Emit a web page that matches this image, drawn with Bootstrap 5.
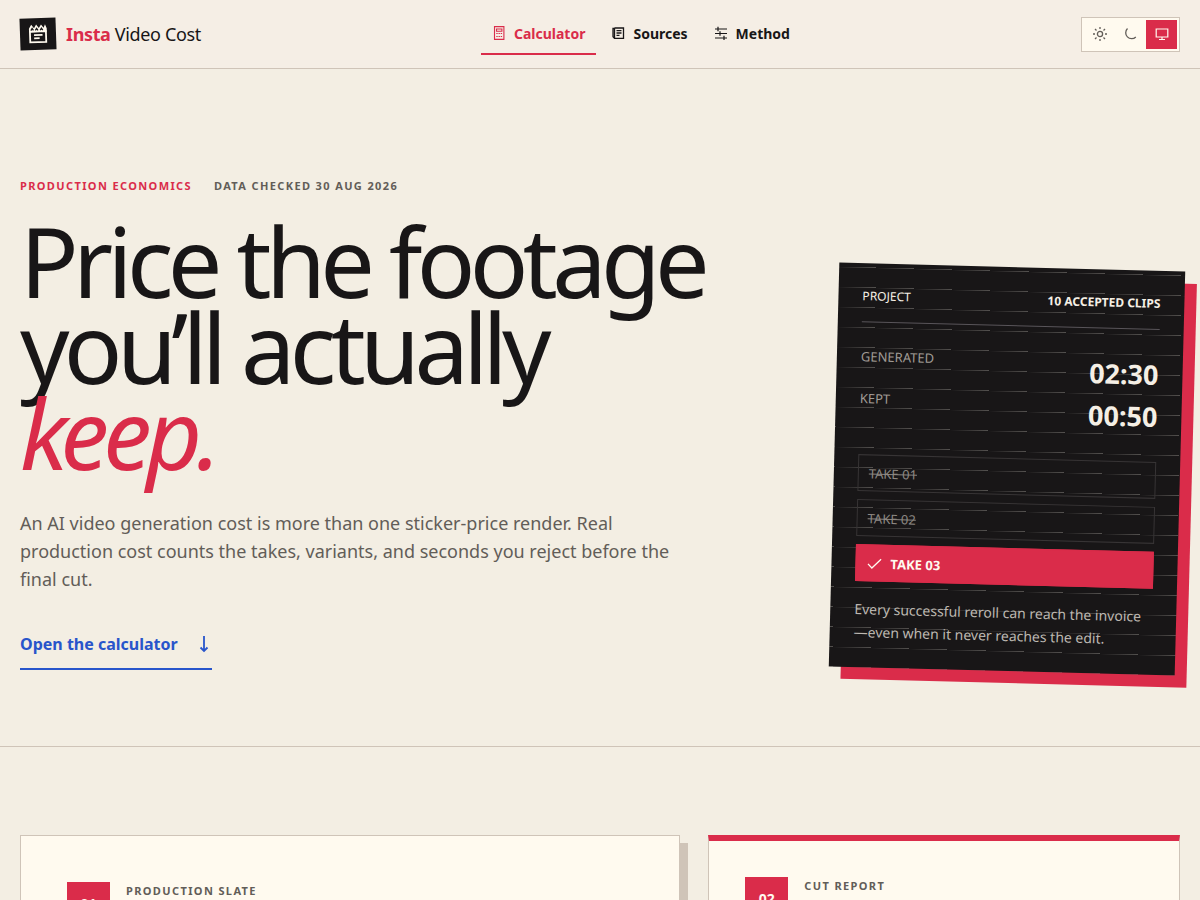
<!DOCTYPE html>
<html lang="en">
<head>
<meta charset="utf-8">
<meta name="viewport" content="width=device-width, initial-scale=1">
<title>Insta Video Cost</title>
<link href="https://cdn.jsdelivr.net/npm/bootstrap@5.3.0/dist/css/bootstrap.min.css" rel="stylesheet">
<style>
:root{--ink:#181617;--red:#da2c4a;--paper:#f3eee3;--sheet:#fffaef;--rule:#cfc4b8;--muted:#625d58;--blue:#2855cb}
body{background:var(--paper);color:var(--ink);font-family:"Noto Sans",sans-serif}
svg{fill:none;stroke:currentColor;flex:none}
.text-red{color:var(--red)}
.site-header{background:#f5eee5;border-bottom:1px solid var(--rule);padding:12px 20px;min-height:69px}
.brand{color:var(--ink);gap:10px;font-size:18px;line-height:24px;letter-spacing:-.02em}
.brand-mark{width:36px;height:32px;background:var(--ink);color:var(--sheet);transform:rotate(-2deg);place-items:center}
.main-nav{gap:4px}
.main-nav .nav-link{display:flex;align-items:center;gap:8px;height:42px;padding:0 11px;font-size:14px;font-weight:700;color:var(--ink);border-bottom:2px solid transparent}
.main-nav .nav-link.active{color:var(--red);border-color:var(--red)}
.theme-switch{background:var(--sheet);border:1px solid var(--rule);padding:2px}
.theme-switch button{width:31px;height:29px;padding:0;border:0;background:none;color:var(--muted);display:grid;place-items:center}
.theme-switch button.active{background:var(--red);color:var(--sheet)}
.hero{padding:108px 20px 75px;border-bottom:1px solid var(--rule)}
.hero-copy{max-width:700px;padding-bottom:1px}
.eyebrow{font-size:11px;line-height:18px;font-weight:700;letter-spacing:.125em;text-transform:uppercase;color:var(--muted)}
.eyebrow-row{column-gap:22px}
.hero h1{font-size:97px;line-height:86px;font-weight:400;letter-spacing:-.058em;margin:22px 0 0}
.hero h1 em{color:var(--red)}
.intro{font-size:18px;line-height:28px;color:var(--muted);max-width:660px;margin:34px 0 0}
.cta{color:var(--blue);border-bottom:2px solid var(--blue);font-weight:700;font-size:16px;line-height:24px;gap:18px;padding:12px 0;margin-top:27px}
.slate{width:346px;padding:24px;color:#f5efe5;background:repeating-linear-gradient(0deg,transparent 0 19px,rgba(255,250,239,.26) 20px),var(--ink);box-shadow:12px 12px 0 var(--red);transform:rotate(1.5deg)}
.slate-top{font-size:12px;line-height:18px;padding-bottom:16px;border-bottom:1px solid #59555a}
.times{font-size:13px;line-height:20px;padding:24px 0;color:#a09b95;margin:0}
.times dt{font-weight:400}
.times dd{margin:0;font-size:27px;line-height:42px;font-weight:700;color:#f5efe5}
.times div{height:42px}
.takes{gap:8px;font-size:13px;line-height:18px}
.takes li{padding:9px 10px;border:1px solid #373435;color:#8d8883;height:37px}
.takes li.kept{background:var(--red);border-color:var(--red);color:var(--sheet);font-weight:700;gap:8px}
.slate-note{font-size:14px;line-height:23px;color:#bdb8b1;margin:16px 0 0}
.panels{display:grid;grid-template-columns:7fr 5fr;gap:28px;padding:88px 20px 0}
.panel{background:var(--sheet);border:1px solid var(--rule);gap:16px}
.panel-input{padding:46px;box-shadow:8px 8px 0 var(--rule)}
.panel-report{padding:36px;border-top:6px solid var(--red)}
.step{width:43px;height:43px;background:var(--red);color:var(--sheet);font-size:14px;font-weight:700;display:grid;place-items:center}
@media(max-width:991px){.hero h1{font-size:64px;line-height:60px}.panels{grid-template-columns:1fr}}
</style>
</head>
<body>
<header class="site-header d-flex flex-wrap align-items-center justify-content-between">
  <a class="brand d-flex align-items-center text-decoration-none" href="#">
    <span class="brand-mark d-grid"><svg width="20" height="20" viewBox="0 0 20 20" stroke-width="1.8"><path d="M2 7.500h16v10.600H2zM6 11h8.500M6 14.200h5.500"/><path fill="currentColor" stroke="none" d="M1.100 8V4.500L3.500.5 6.200 4 8.400.5 11 4 13.300.5 15.800 4 17.300.5 18.900 4.500V8z"/><path stroke="#181617" stroke-width="1.300" d="m3 6.300 1.300-2 1.300 2M7.500 6.300l1.300-2 1.300 2M12.300 6.300l1.300-2 1.300 2"/></svg></span>
    <span><strong class="text-red">Insta</strong> Video Cost</span>
  </a>
  <nav class="main-nav nav" aria-label="Main">
    <a class="nav-link active" href="#calculator"><svg width="14" height="14" viewBox="0 0 14 14" stroke-width="1.100"><path d="M2.500.6h9.400v12.800H2.500zM4.500 3h5.400v2.200H4.500zM4.300 7.500h1.400m.8 0h1.400m.8 0h1.400M4.300 10.500h1.400m.8 0h1.400m.8 0h1.400"/></svg>Calculator</a>
    <a class="nav-link" href="#sources"><svg width="14" height="14" viewBox="0 0 14 14" stroke-width="1.300"><path d="M3.500 2h9v10.300H3.500V2M3.500 2.500H2v8.300l1.500 1.500M5.500 4.600h5M5.500 7h5M5.500 9.400h3"/></svg>Sources</a>
    <a class="nav-link" href="#method"><svg width="14" height="14" viewBox="0 0 14 14" stroke-width="1.200"><path d="M1 3h12M1 7.500h12M1 12h12M4 .8v4.400M6 5.300v4.400M10 9.800v4.200"/></svg>Method</a>
  </nav>
  <div class="theme-switch d-flex" role="group" aria-label="Theme">
    <button type="button" aria-label="Light"><svg width="14" height="14" viewBox="0 0 14 14" stroke-width="1.300"><circle cx="7" cy="7" r="2.600"/><path d="M7 0v2M7 12v2M0 7h2M12 7h2M2 2l1.500 1.500M10.500 10.500 12 12M2 12l1.500-1.500M10.500 3.500 12 2"/></svg></button>
    <button type="button" aria-label="Dark"><svg width="14" height="14" viewBox="0 0 14 14" stroke-width="1.300"><path d="M3.500 1.500A5 5 0 0 0 11.800 10"/></svg></button>
    <button type="button" class="active" aria-label="System"><svg width="14" height="14" viewBox="0 0 14 14" stroke-width="1.200"><path d="M1.200 2h11.600v8H1.200zM7 10v2.500M4 12.500h6"/></svg></button>
  </div>
</header>
<main>
  <section class="hero d-flex flex-wrap align-items-end justify-content-between">
    <div class="hero-copy">
      <div class="eyebrow eyebrow-row d-flex flex-wrap"><span class="text-red">Production economics</span><span>Data checked 30 Aug 2026</span></div>
      <h1>Price the footage you’ll actually <em>keep.</em></h1>
      <p class="intro">An AI video generation cost is more than one sticker-price render. Real production cost counts the takes, variants, and seconds you reject before the final cut.</p>
      <a class="cta d-inline-flex align-items-center text-decoration-none" href="#calculator">Open the calculator <svg width="16" height="18" viewBox="0 0 16 18" stroke-width="1.800"><path d="M8 1v15M4.500 12.500 8 16l3.500-3.500"/></svg></a>
    </div>
    <aside class="slate">
      <div class="slate-top d-flex justify-content-between"><span>PROJECT</span><strong>10 ACCEPTED CLIPS</strong></div>
      <dl class="times">
        <div class="d-flex justify-content-between"><dt>GENERATED</dt><dd>02:30</dd></div>
        <div class="d-flex justify-content-between"><dt>KEPT</dt><dd>00:50</dd></div>
      </dl>
      <ul class="takes list-unstyled d-flex flex-column m-0">
        <li><s>TAKE 01</s></li>
        <li><s>TAKE 02</s></li>
        <li class="kept d-flex align-items-center"><svg width="16" height="16" viewBox="0 0 16 16" stroke-width="1.300"><path d="m1.500 8.500 4 4 9-9"/></svg>TAKE 03</li>
      </ul>
      <p class="slate-note">Every successful reroll can reach the invoice—even when it never reaches the edit.</p>
    </aside>
  </section>
  <section class="panels" id="calculator">
    <div class="panel panel-input d-flex"><span class="step">01</span><span class="eyebrow">Production slate</span></div>
    <div class="panel panel-report d-flex"><span class="step">02</span><span class="eyebrow">Cut report</span></div>
  </section>
</main>
<script src="https://cdn.jsdelivr.net/npm/bootstrap@5.3.0/dist/js/bootstrap.bundle.min.js"></script>
</body>
</html>
